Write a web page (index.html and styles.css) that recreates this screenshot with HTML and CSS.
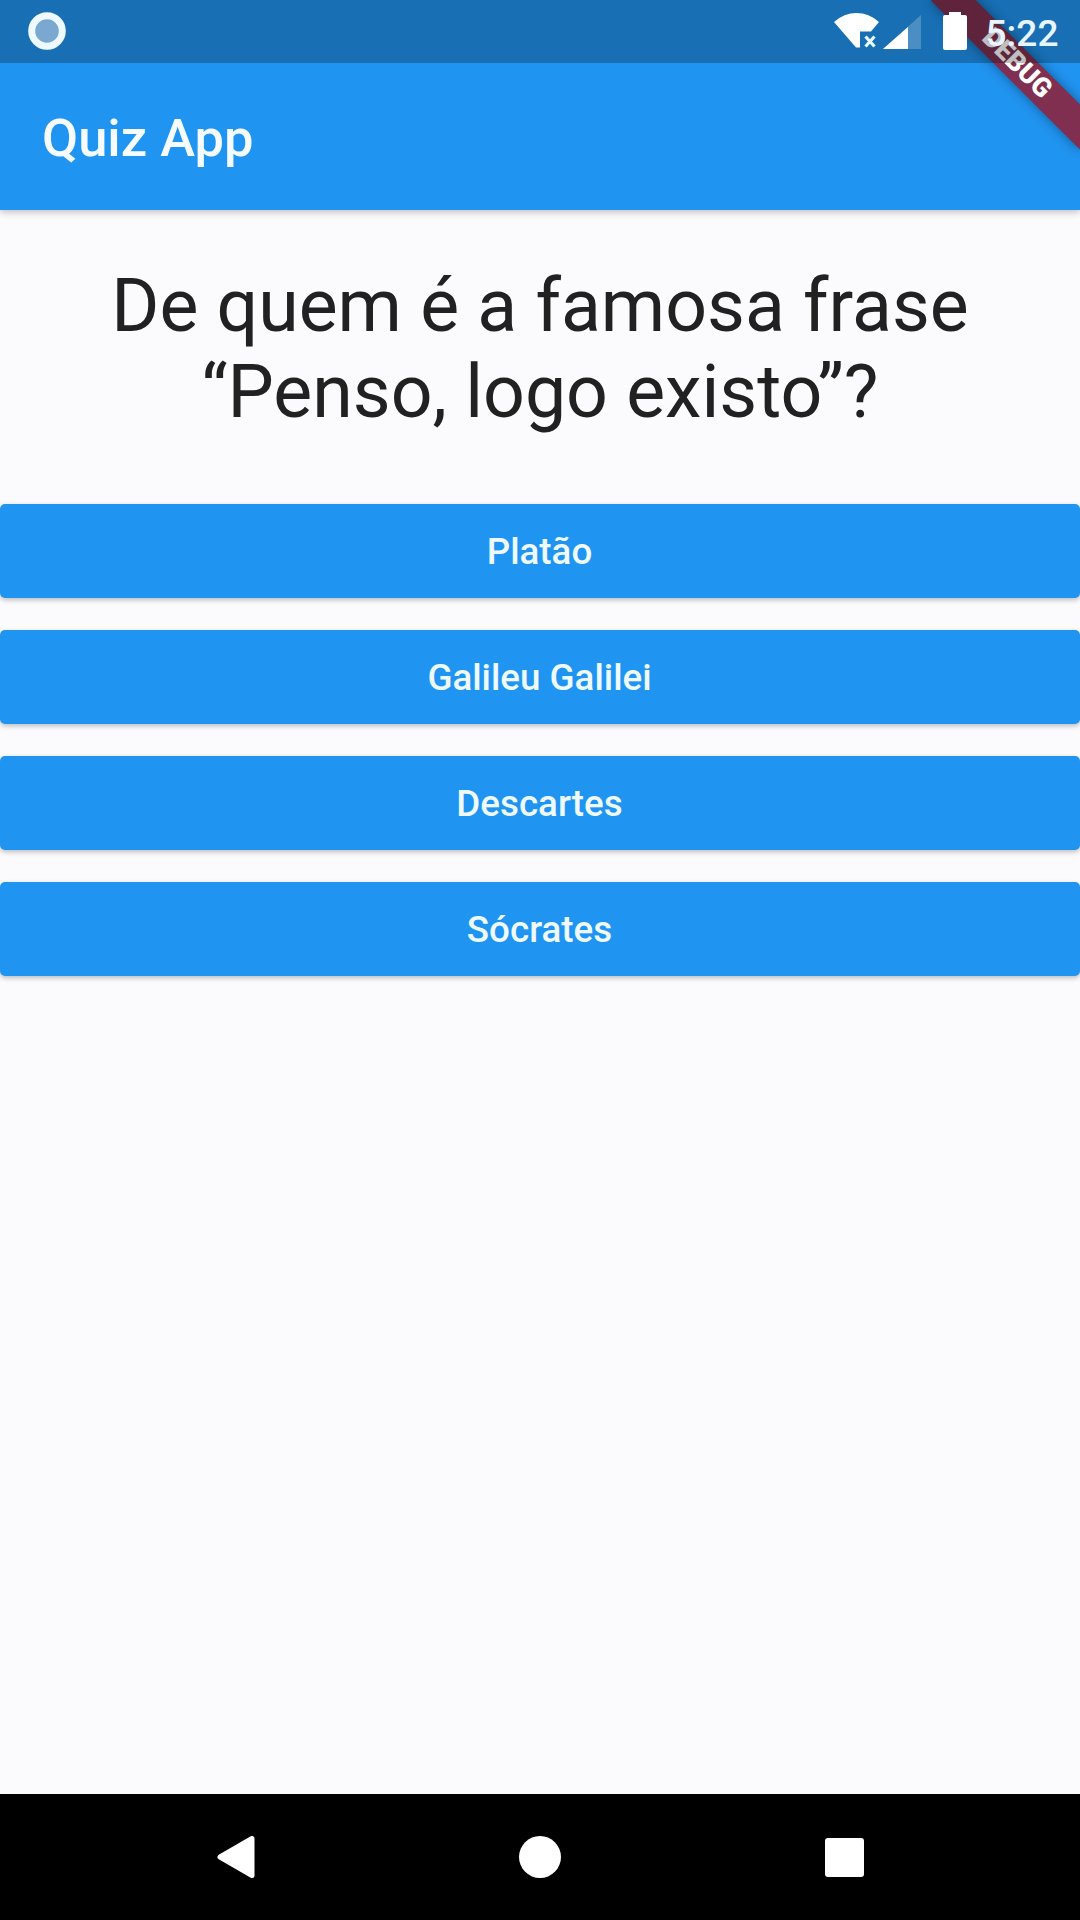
FILE: index.html
```html
<!DOCTYPE html>
<html lang="pt">
<head>
<meta charset="utf-8">
<title>Quiz App</title>
<link rel="stylesheet" href="styles.css">
</head>
<body>
<div class="screen">
  <header class="top">
    <div class="status">
      <svg class="status-dot" viewBox="0 0 38 38"><circle cx="19" cy="19" r="15.3" fill="#7ba8d0" stroke="#eefaff" stroke-width="7"/></svg>
      <div class="status-right">
        <svg class="wifi" viewBox="0 0 45 36"><path d="M0 9Q10 0 22.500 0T45 9L37 18.500H26V34.500H22Z" fill="#fff"/><path d="M31.500 23.500l9 10m0-10l-9 10" stroke="#e8f8ff" stroke-width="3.200"/></svg>
        <svg class="signal" viewBox="0 0 38 34"><path d="M38 0V34H0Z" fill="#fff" opacity=".22"/><path d="M25 12V34H0Z" fill="#fff"/></svg>
        <svg class="battery" viewBox="0 0 24 38"><path d="M6 0H18V3H22Q24 3 24 5V36Q24 38 22 38H2Q0 38 0 36V5Q0 3 2 3H6Z" fill="#fff"/></svg>
        <span class="time">5:22</span>
      </div>
    </div>
    <h1 class="title">Quiz App</h1>
  </header>
  <main class="content">
    <p class="question">De quem é a famosa frase<br>“Penso, logo existo”?</p>
    <div class="answers">
      <button class="answer">Platão</button>
      <button class="answer">Galileu Galilei</button>
      <button class="answer">Descartes</button>
      <button class="answer">Sócrates</button>
    </div>
  </main>
  <nav class="nav">
    <svg class="back" viewBox="0 0 38 42"><path d="M35 2.500V39.500L3 21Z" fill="#fff" stroke="#fff" stroke-width="5" stroke-linejoin="round"/></svg>
    <span class="home"></span>
    <span class="recent"></span>
  </nav>
  <div class="debug">DEBUG</div>
</div>
</body>
</html>
```
FILE: styles.css
```css
* { box-sizing: border-box; }
body { margin: 0; font-family: Roboto, sans-serif; }
.screen {
  position: relative;
  width: 1080px;
  height: 1920px;
  overflow: hidden;
  display: flex;
  flex-direction: column;
  background: #fbfafc;
}
.top {
  height: 210px;
  flex: none;
  background: #2094f1;
  box-shadow: 0 2px 7px rgba(0, 0, 0, .25);
}
.status {
  position: relative;
  z-index: 2;
  height: 63px;
  padding: 0 21px 0 28px;
  display: flex;
  justify-content: space-between;
  background: rgba(0, 0, 0, .25);
}
.status-dot { width: 38px; height: 38px; margin-top: 12px; }
.status-right { display: flex; align-items: flex-start; }
.wifi { width: 45px; height: 36px; margin-top: 13px; }
.signal { width: 38px; height: 34px; margin: 15px 0 0 4px; }
.battery { width: 24px; height: 38px; margin: 12px 18px 0 22px; }
.time {
  width: 74px;
  font-size: 37px;
  font-weight: 500;
  line-height: 43px;
  margin-top: 12px;
  text-align: center;
  color: #e6f5ff;
}
.title {
  margin: 0;
  padding: 2px 0 0 42px;
  font-size: 52.5px;
  font-weight: 500;
  line-height: 147px;
  color: #f6fbff;
}
.content { flex: 1; padding-top: 53px; }
.question {
  margin: 0;
  height: 241px;
  font-size: 73.4px;
  line-height: 86px;
  text-align: center;
  color: #212121;
}
.answers { display: grid; grid-auto-rows: 94px; gap: 32px; }
.answer {
  border: 0;
  border-radius: 5px;
  padding: 1px 1px 0 0;
  background: #2094f1;
  box-shadow: 0 2px 5px rgba(0, 0, 0, .25);
  font: 500 36.75px/94px Roboto, sans-serif;
  color: #eefaff;
}
.nav {
  height: 126px;
  flex: none;
  padding: 0 216px 0 217px;
  display: flex;
  align-items: center;
  justify-content: space-between;
  background: #000;
}
.back { width: 38px; height: 42px; }
.home { width: 42px; height: 42px; margin-left: -1px; border-radius: 50%; background: #fff; }
.recent { width: 39px; height: 39px; border-radius: 3px; background: #fff; }
.debug {
  position: absolute;
  z-index: 1;
  top: 73.5px;
  left: 975px;
  width: 210px;
  height: 31.5px;
  transform-origin: 105px -73.5px;
  transform: rotate(45deg);
  background: #802f50;
  box-shadow: 0 0 12px rgba(0, 0, 0, .4);
  font-size: 26.8px;
  font-weight: 900;
  line-height: 31.5px;
  text-align: center;
  color: #fff;
}
```
